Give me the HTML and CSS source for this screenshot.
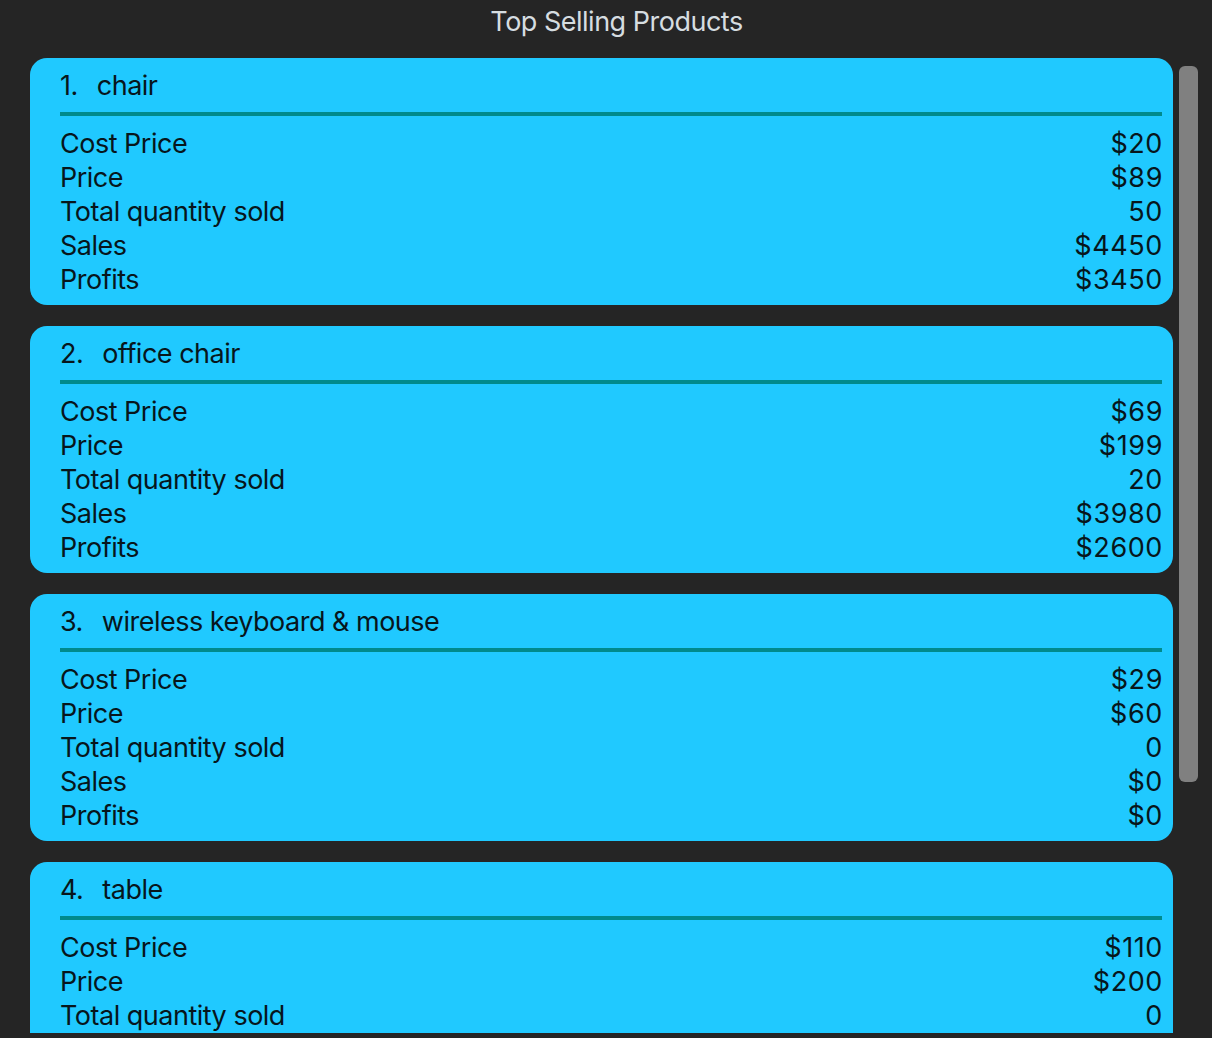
FILE: index.html
```html
<!DOCTYPE html>
<html>
<head>
<meta charset="utf-8">
<link rel="stylesheet" href="styles.css">
</head>
<body>
<h1 class="title">Top Selling Products</h1>
<div class="main">
  <div class="list">
    <section class="card">
      <div class="card-head"><span class="num">1.</span><span class="name">chair</span></div>
      <div class="rule"></div>
      <div class="row"><span>Cost Price</span><span class="val">$20</span></div>
      <div class="row"><span>Price</span><span class="val">$89</span></div>
      <div class="row"><span>Total quantity sold</span><span class="val">50</span></div>
      <div class="row"><span>Sales</span><span class="val">$4450</span></div>
      <div class="row"><span>Profits</span><span class="val">$3450</span></div>
    </section>
    <section class="card">
      <div class="card-head"><span class="num">2.</span><span class="name">office chair</span></div>
      <div class="rule"></div>
      <div class="row"><span>Cost Price</span><span class="val">$69</span></div>
      <div class="row"><span>Price</span><span class="val">$199</span></div>
      <div class="row"><span>Total quantity sold</span><span class="val">20</span></div>
      <div class="row"><span>Sales</span><span class="val">$3980</span></div>
      <div class="row"><span>Profits</span><span class="val">$2600</span></div>
    </section>
    <section class="card">
      <div class="card-head"><span class="num">3.</span><span class="name">wireless keyboard &amp; mouse</span></div>
      <div class="rule"></div>
      <div class="row"><span>Cost Price</span><span class="val">$29</span></div>
      <div class="row"><span>Price</span><span class="val">$60</span></div>
      <div class="row"><span>Total quantity sold</span><span class="val">0</span></div>
      <div class="row"><span>Sales</span><span class="val">$0</span></div>
      <div class="row"><span>Profits</span><span class="val">$0</span></div>
    </section>
    <section class="card">
      <div class="card-head"><span class="num">4.</span><span class="name">table</span></div>
      <div class="rule"></div>
      <div class="row"><span>Cost Price</span><span class="val">$110</span></div>
      <div class="row"><span>Price</span><span class="val">$200</span></div>
      <div class="row"><span>Total quantity sold</span><span class="val">0</span></div>
      <div class="row"><span>Sales</span><span class="val">$0</span></div>
      <div class="row"><span>Profits</span><span class="val">$0</span></div>
    </section>
  </div>
  <div class="scrollbar"><div class="thumb"></div></div>
</div>
</body>
</html>
```
FILE: styles.css
```css
html, body {
  margin: 0;
  padding: 0;
  background: #252525;
  height: 100%;
  overflow: hidden;
}
body {
  font-family: Inter, "Noto Sans", sans-serif;
  color: #07161c;
}
.title {
  margin: 5px 0 0 0;
  padding-left: 21px;
  height: 53px;
  line-height: 34px;
  font-size: 27px;
  font-weight: 400;
  letter-spacing: -0.5px;
  text-align: center;
  color: #d6dde0;
}
.main {
  display: flex;
  height: 975px;
  overflow: hidden;
  padding-left: 30px;
}
.list {
  width: 1143px;
  display: flex;
  flex-direction: column;
  gap: 21px;
  flex-shrink: 0;
}
.card {
  background: #20c9ff;
  border-radius: 17px;
  padding: 11px 11px 8px 30px;
  flex-shrink: 0;
}
.card-head {
  display: flex;
  line-height: 34px;
  font-size: 27px;
  letter-spacing: -0.5px;
  height: 34px;
}
.num {
  margin-right: 19px;
}
.rule {
  height: 4px;
  background: #008a8c;
  margin: 9px 0 11px 0;
}
.row {
  display: flex;
  justify-content: space-between;
  height: 34px;
  line-height: 34px;
  font-size: 27px;
  letter-spacing: -0.5px;
}
.val {
  letter-spacing: 0.6px;
  margin-right: -1px;
}
.scrollbar {
  margin-left: 6px;
  padding-top: 8px;
}
.thumb {
  width: 19px;
  height: 716px;
  background: #808080;
  border-radius: 6px;
}
```
